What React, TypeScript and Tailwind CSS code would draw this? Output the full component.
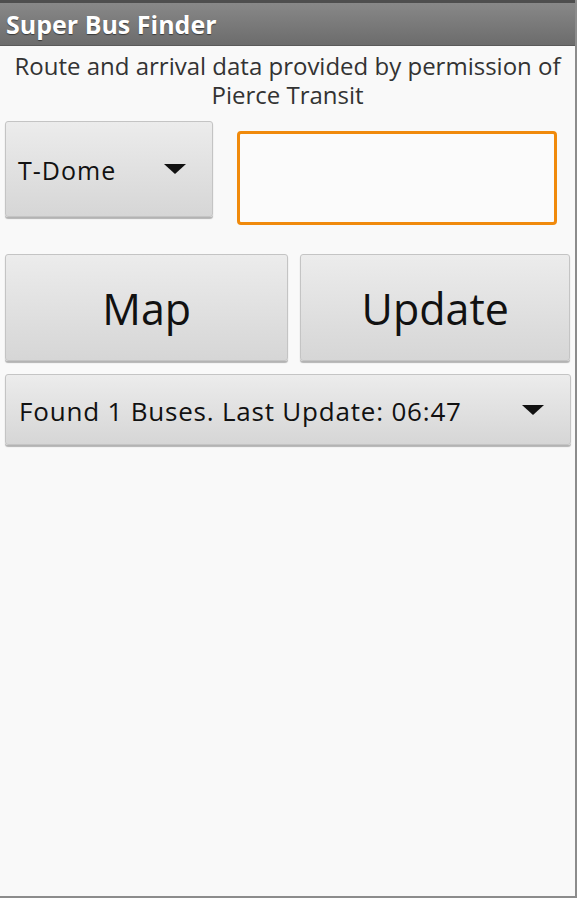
import React from "react";

const Arrow = ({ className }: { className?: string }) => (
  <svg className={className} width="22" height="10" viewBox="0 0 22 10">
    <path d="M0 0H22L11 10Z" fill="#111" />
  </svg>
);

const btn =
  "rounded-[3px] border border-[#c4c4c4] bg-gradient-to-b from-[#ececec] to-[#d6d6d6] shadow-[0_2px_1px_rgba(0,0,0,0.28)]";

export default function App() {
  return (
    <div
      className="w-[578px] h-[900px] bg-white"
      style={{ fontFamily: '"Open Sans", "DejaVu Sans", sans-serif' }}
    >
      <div className="w-[577px] h-[898px] border-r-2 border-b-2 border-[#8c8c8c] bg-[#f9f9f9] flex flex-col">
        <div className="h-[46px] border-t-[3px] border-[#4e4e4e] bg-gradient-to-b from-[#888] to-[#6c6c6c] border-b border-b-[#5a5a5a] flex items-center px-[6px]">
          <span className="text-white font-bold text-[25px] leading-none [text-shadow:0_1px_1px_rgba(0,0,0,0.5)]">
            Super Bus Finder
          </span>
        </div>

        <p className="text-center text-[#333] text-[24px] leading-[29px] mt-[5px] px-2">
          Route and arrival data provided by permission of Pierce Transit
        </p>

        <div className="flex items-start mt-[12px] px-[5px]">
          <div className={`${btn} w-[208px] h-[96px] flex items-center justify-between pl-[12px] pr-[26px]`}>
            <span className="text-[25px] tracking-[1px] text-[#111] pt-[3px]">T-Dome</span>
            <Arrow />
          </div>
          <div className="ml-[24px] mt-[10px] w-[320px] h-[94px] rounded-[4px] border-[3px] border-[#f08a0c] bg-[#fbfbfb]" />
        </div>

        <div className="flex gap-[12px] mt-[29px] px-[5px]">
          <div className={`${btn} w-[284px] h-[107px] flex items-center justify-center pt-[4px]`}>
            <span className="text-[43px] text-[#111]">Map</span>
          </div>
          <div className={`${btn} w-[270px] h-[107px] flex items-center justify-center pt-[4px]`}>
            <span className="text-[43px] text-[#111]">Update</span>
          </div>
        </div>

        <div className={`${btn} mx-[5px] mt-[13px] w-[566px] h-[71px] flex items-center justify-between pl-[13px] pr-[26px]`}>
          <span className="text-[26px] tracking-[0.8px] text-[#111] pt-[3px]">Found 1 Buses. Last Update: 06:47</span>
          <Arrow />
        </div>
      </div>
    </div>
  );
}
